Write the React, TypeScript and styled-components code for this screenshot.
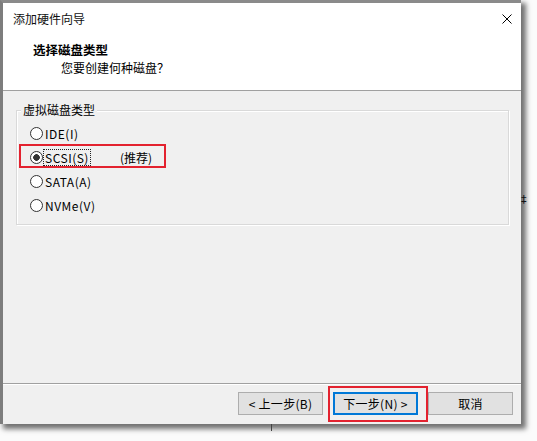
import React from "react";
import styled, { createGlobalStyle, css } from "styled-components";

const Global = createGlobalStyle`
  html, body {
    margin: 0;
    padding: 0;
    width: 537px;
    height: 441px;
    overflow: hidden;
    background: #ffffff;
  }
  body {
    font-family: "Noto Sans CJK SC", "Noto Sans", sans-serif;
    font-size: 12px;
    color: #000;
  }
`;

const Stage = styled.div`
  position: relative;
  width: 537px;
  height: 441px;
  background: #fbfbfb;
`;

const Window = styled.div`
  width: 521px;
  height: 424px;
  box-sizing: border-box;
  border-left: 3px solid #7d7d7d;
  border-top: 3px solid #8a8a8a;
  background: #f0f0f0;
  box-shadow: 4px 4px 5px 1px rgba(0, 0, 0, 0.55);
  display: flex;
  flex-direction: column;
  position: relative;
  z-index: 1;
`;

const Header = styled.div`
  height: 88px;
  box-sizing: border-box;
  background: #fff;
  border-bottom: 1px solid #a0a0a0;
  display: flex;
  flex-direction: column;
`;

const TitleBar = styled.div`
  height: 32px;
  display: flex;
  align-items: center;
  justify-content: space-between;
  padding: 0 9px 0 10px;
`;

const TitleText = styled.span`
  font-size: 12px;
  line-height: 16px;
  color: #111;
`;

const CloseBtn = styled.span`
  width: 10px;
  height: 10px;
  display: flex;
  margin-top: -1px;
`;

const Heading = styled.div`
  margin: 7px 0 0 30px;
  font-size: 12.5px;
  font-weight: bold;
  line-height: 16px;
`;

const SubHeading = styled.div`
  margin: 2px 0 0 58px;
  font-size: 12px;
  line-height: 16px;
`;

const Body = styled.div`
  flex: 1;
  display: flex;
  flex-direction: column;
`;

const GroupBox = styled.div`
  position: relative;
  margin: 19px 12px 0 13px;
  border: 1px solid #d9d9d9;
  box-shadow: inset 1px 1px 0 #ffffff, 1px 1px 0 #ffffff;
  padding: 10px 0 7px 0;
  display: flex;
  flex-direction: column;
`;

const GroupLabel = styled.span`
  position: absolute;
  top: -9px;
  left: 4px;
  padding: 0 2px;
  background: #f0f0f0;
  line-height: 16px;
`;

const RadioRow = styled.div<{ $highlight?: boolean }>`
  position: relative;
  height: 24px;
  display: flex;
  align-items: center;
  padding-left: 13px;
  ${(p) =>
    p.$highlight &&
    css`
      &::after {
        content: "";
        position: absolute;
        left: 2px;
        top: -1px;
        width: 147px;
        height: 24px;
        box-sizing: border-box;
        border: 2px solid #e3222f;
      }
    `}
`;

const RadioCircle = styled.span<{ $checked?: boolean }>`
  width: 13px;
  height: 13px;
  box-sizing: border-box;
  border-radius: 50%;
  border: 1px solid #333;
  background: ${(p) =>
    p.$checked
      ? "radial-gradient(circle, #333 0, #333 3px, #fff 3.6px)"
      : "#fff"};
`;

const RadioText = styled.span<{ $focused?: boolean }>`
  margin-left: 1px;
  padding: 0 1px;
  line-height: 15px;
  letter-spacing: 0.5px;
  ${(p) =>
    p.$focused &&
    css`
      outline: 1px dotted #222;
    `}
`;

const Note = styled.span`
  margin-left: 30px;
  line-height: 15px;
`;

const Spacer = styled.div`
  flex: 1;
`;

const Footer = styled.div`
  border-top: 1px solid #a0a0a0;
  box-shadow: inset 0 1px 0 #fff;
  display: flex;
  justify-content: flex-end;
  gap: 10px;
  padding: 8px 8px 9px 0;
`;

const Button = styled.button<{ $primary?: boolean; $marked?: boolean }>`
  position: relative;
  width: 85px;
  height: 23px;
  box-sizing: border-box;
  margin: 0;
  padding: 0;
  font-family: "Noto Sans CJK SC", "Noto Sans", sans-serif;
  font-size: 12px;
  letter-spacing: 0.3px;
  color: #000;
  background: #e1e1e1;
  border: ${(p) => (p.$primary ? "2px solid #0078d7" : "1px solid #adadad")};
  display: flex;
  align-items: center;
  justify-content: center;
  ${(p) =>
    p.$marked &&
    css`
      &::after {
        content: "";
        position: absolute;
        left: -7px;
        top: -8px;
        right: -12px;
        bottom: -9px;
        border: 2px solid #e3222f;
      }
    `}
`;

const Tick = styled.span`
  position: absolute;
  left: 271px;
  top: 424px;
  width: 1px;
  height: 7px;
  background: #444;
  z-index: 2;
`;

const Peek = styled.span`
  position: absolute;
  left: 521px;
  top: 193px;
  font-family: "DejaVu Sans", sans-serif;
  font-size: 11px;
  line-height: 14px;
  color: #111;
  z-index: 2;
`;

const options = [
  { label: "IDE(I)" },
  { label: "SCSI(S)", checked: true, note: "(推荐)" },
  { label: "SATA(A)" },
  { label: "NVMe(V)" },
];

export default function App() {
  return (
    <Stage>
      <Global />
      <Window>
        <Header>
          <TitleBar>
            <TitleText>添加硬件向导</TitleText>
            <CloseBtn>
              <svg width="10" height="10" viewBox="0 0 10 10">
                <path d="M0.5 0.5 L9.5 9.5 M9.5 0.5 L0.5 9.5" stroke="#000" strokeWidth="1" fill="none" />
              </svg>
            </CloseBtn>
          </TitleBar>
          <Heading>选择磁盘类型</Heading>
          <SubHeading>您要创建何种磁盘？</SubHeading>
        </Header>
        <Body>
          <GroupBox>
            <GroupLabel>虚拟磁盘类型</GroupLabel>
            {options.map((o) => (
              <RadioRow key={o.label} $highlight={!!o.checked}>
                <RadioCircle $checked={!!o.checked} />
                <RadioText $focused={!!o.checked}>{o.label}</RadioText>
                {o.note && <Note>{o.note}</Note>}
              </RadioRow>
            ))}
          </GroupBox>
          <Spacer />
          <Footer>
            <Button>&lt; 上一步(B)</Button>
            <Button $primary $marked>
              下一步(N) &gt;
            </Button>
            <Button>取消</Button>
          </Footer>
        </Body>
      </Window>
      <Tick />
      <Peek>‡</Peek>
    </Stage>
  );
}
